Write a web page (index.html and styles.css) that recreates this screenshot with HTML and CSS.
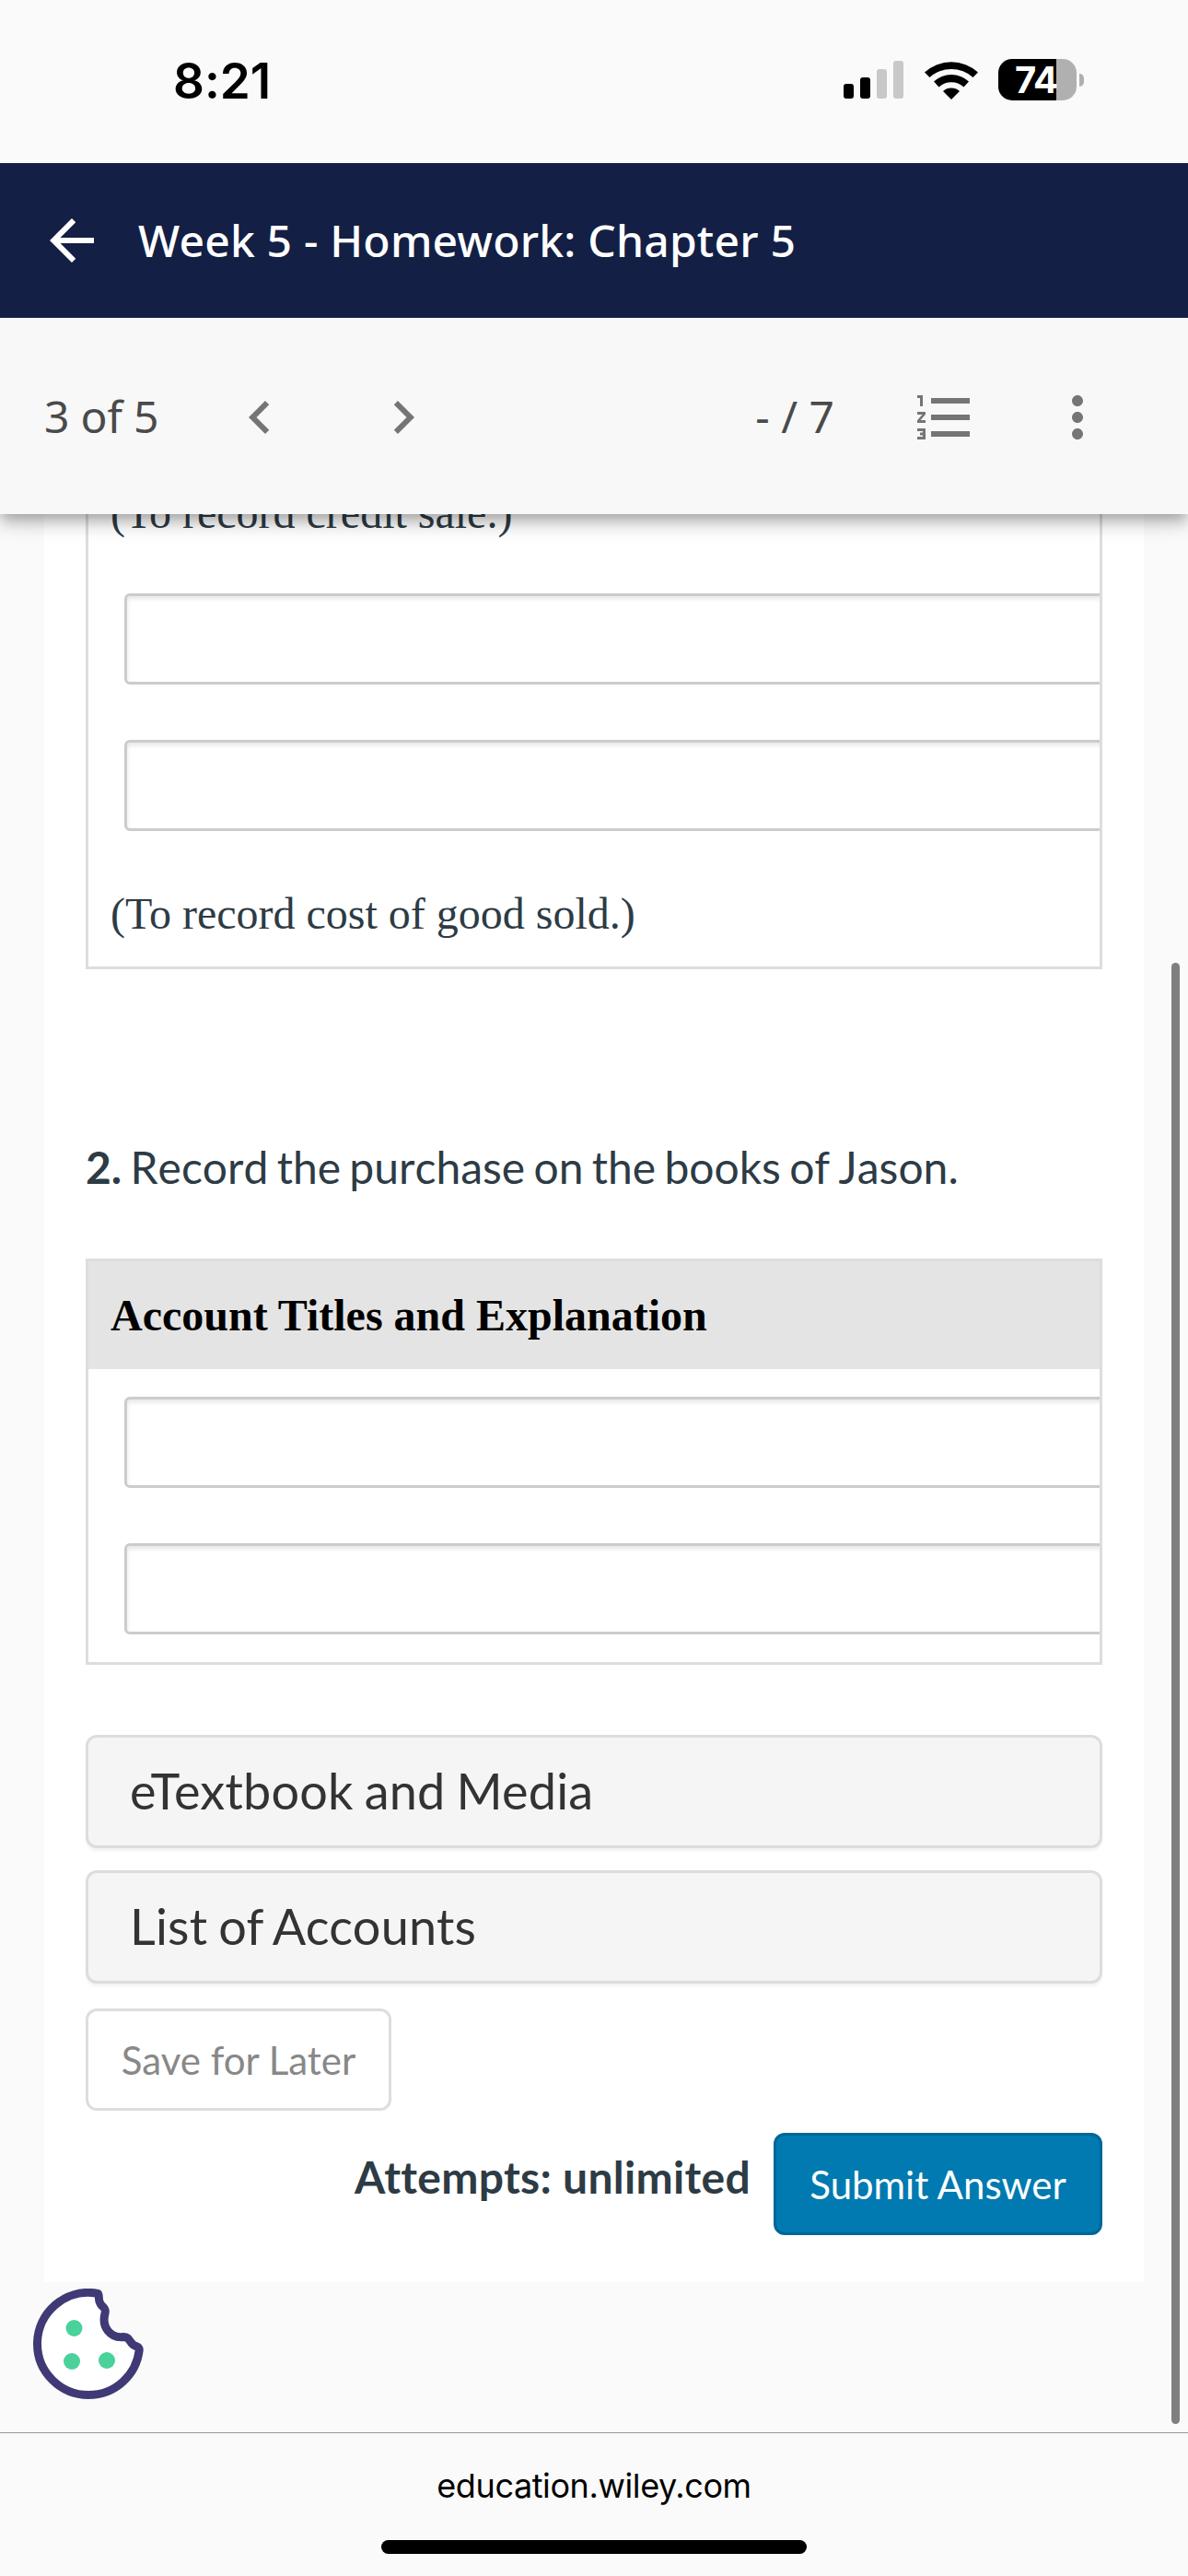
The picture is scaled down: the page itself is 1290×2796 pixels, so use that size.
FILE: index.html
```html
<!DOCTYPE html>
<html lang="en">
<head>
    <meta charset="UTF-8">
    <meta name="viewport" content="width=device-width, initial-scale=1.0">
    <title>Week 5 - Homework: Chapter 5</title>
    <link rel="stylesheet" href="styles.css">
</head>
<body>
    <div class="status-bar">
        <span class="time">8:21</span>
        <div class="status-icons">
            <svg class="signal" width="65" height="41" viewBox="0 0 65 41">
                <rect x="0" y="25" width="11" height="16" rx="3"/>
                <rect x="18" y="18" width="11" height="23" rx="3"/>
                <rect x="36" y="9" width="11" height="32" rx="3" fill="#c8c8c8"/>
                <rect x="54" y="0" width="11" height="41" rx="3" fill="#c8c8c8"/>
            </svg>
            <svg class="wifi" width="58" height="42" viewBox="0 0 58 42">
                <path d="M0 12.500A43 43 0 0 1 58 12.500L52.500 18A35 35 0 0 0 5.500 18Z"/>
                <path d="M10 22.500A28 28 0 0 1 48 22.500L42.500 28.500A20 20 0 0 0 15.500 28.500Z"/>
                <path d="M20 33A13.500 13.500 0 0 1 38 33L29 42Z"/>
            </svg>
            <div class="battery"><span>74</span></div>
            <div class="battery-tip"></div>
        </div>
    </div>

    <header class="header">
        <svg width="72" height="72" viewBox="0 0 24 24" fill="#fff">
            <path d="M20 11H7.83l5.59-5.59L12 4l-8 8 8 8 1.41-1.41L7.83 13H20v-2z"/>
        </svg>
        <h1>Week 5 - Homework: Chapter 5</h1>
    </header>

    <nav class="toolbar">
        <span class="position">3 of 5</span>
        <svg class="icon prev" viewBox="0 0 24 24"><path d="M15.41 7.41L14 6l-6 6 6 6 1.41-1.41L10.83 12z"/></svg>
        <svg class="icon next" viewBox="0 0 24 24"><path d="M10 6L8.59 7.41 13.17 12l-4.58 4.59L10 18l6-6z"/></svg>
        <span class="score">- / 7</span>
        <svg class="icon list" viewBox="0 0 24 24"><path d="M2 17h2v.5H3v1h1v.5H2v1h3v-4H2v1zm1-9h1V4H2v1h1v3zm-1 3h1.8L2 13.1v.9h3v-1H3.2L5 10.9V10H2v1zm5-6v2h14V5H7zm0 14h14v-2H7v2zm0-6h14v-2H7v2z"/></svg>
        <svg class="icon more" viewBox="0 0 24 24"><path d="M12 8c1.1 0 2-.9 2-2s-.9-2-2-2-2 .9-2 2 .9 2 2 2zm0 2c-1.1 0-2 .9-2 2s.9 2 2 2 2-.9 2-2-.9-2-2-2zm0 6c-1.1 0-2 .9-2 2s.9 2 2 2 2-.9 2-2-.9-2-2-2z"/></svg>
    </nav>

    <main class="page">
        <div class="card">
            <div class="journal journal-top">
                <p class="note note-clipped">(To record credit sale.)</p>
                <div class="field"></div>
                <div class="field"></div>
                <p class="note">(To record cost of good sold.)</p>
            </div>

            <p class="question"><b>2.</b> Record the purchase on the books of Jason.</p>

            <div class="journal">
                <div class="journal-head">Account Titles and Explanation</div>
                <div class="field"></div>
                <div class="field"></div>
            </div>

            <div class="panel first-panel">eTextbook and Media</div>
            <div class="panel">List of Accounts</div>

            <button type="button" class="btn save">Save for Later</button>

            <div class="submit-row">
                <span class="attempts">Attempts: unlimited</span>
                <button type="button" class="btn submit">Submit Answer</button>
            </div>
        </div>

        <svg class="cookie" width="122" height="120" viewBox="0 0 122 120">
            <path d="M68 5C35 0 4.500 26 4.500 60C4.500 91 30 115.500 60 115.500C90 115.500 112 93 115.200 67C115.500 62 111 64 107.500 60C103 54 102.500 52.500 98 52.500C84 54 74 42 78 27C79.500 21 76 21 73 16.500C70 12 72.500 9 70.500 5.500Q70 5 68 5Z" fill="#fff" stroke="#3f3975" stroke-width="9" stroke-linejoin="round"/>
            <circle cx="44.500" cy="43" r="9" fill="#4bd19b"/>
            <circle cx="42" cy="79" r="9" fill="#4bd19b"/>
            <circle cx="80" cy="78" r="9" fill="#4bd19b"/>
        </svg>
        <div class="scrollbar"></div>
    </main>

    <footer class="address-bar">
        <span class="url">education.wiley.com</span>
        <div class="home-indicator"></div>
    </footer>
</body>
</html>
```
FILE: styles.css
```css
* {
    box-sizing: border-box;
}

body {
    margin: 0;
    width: 1290px;
    height: 2796px;
    overflow: hidden;
    background-color: #fafafa;
    font-family: Lato, sans-serif;
    font-variant-ligatures: none;
    color: #2d3b45;
    display: flex;
    flex-direction: column;
}

h1, p {
    margin: 0;
}

svg {
    display: block;
    flex: none;
}

/* Phone status bar */
.status-bar {
    height: 177px;
    flex: none;
    display: flex;
    justify-content: space-between;
    align-items: flex-start;
    padding: 56px 113px 0 188px;
    font-family: Inter, sans-serif;
    color: #000;
}

.time {
    font-size: 53px;
    font-weight: 600;
    line-height: 64px;
}

.status-icons {
    display: flex;
    align-items: center;
    padding-top: 8px;
}

.wifi {
    margin: 0 22px 0 23px;
}

.battery {
    width: 85px;
    height: 45px;
    border-radius: 15px;
    background: linear-gradient(to right, #000 63px, #b0b0b0 63px);
    color: #fff;
    font-size: 40px;
    font-weight: 700;
    line-height: 45px;
    padding-left: 18px;
    letter-spacing: -1px;
}

.battery-tip {
    width: 5px;
    height: 14px;
    margin-left: 3px;
    border-radius: 0 7px 7px 0;
    background-color: #b0b0b0;
}

/* Title and navigation */
.header {
    height: 168px;
    flex: none;
    display: flex;
    align-items: center;
    padding-left: 42px;
    background-color: #141f45;
    color: #fff;
    position: relative;
    z-index: 2;
}

.header h1 {
    margin-left: 36px;
    font-family: "Noto Sans", sans-serif;
    font-size: 48px;
    font-weight: 500;
    line-height: 66px;
    letter-spacing: 0.2px;
}

.toolbar {
    height: 213px;
    flex: none;
    display: flex;
    align-items: center;
    padding: 3px 84px 0 48px;
    background-color: #f8f8f8;
    box-shadow: 0 6px 12px -3px rgba(0, 0, 0, 0.2), 0 12px 15px rgba(0, 0, 0, 0.14), 0 3px 30px rgba(0, 0, 0, 0.12);
    position: relative;
    z-index: 1;
    font-family: "Noto Sans", sans-serif;
    font-size: 48px;
    color: #4a4a4a;
}

.icon {
    width: 72px;
    height: 72px;
    fill: #757575;
}

.position,
.score {
    padding-bottom: 3px;
}

.position {
    width: 198px;
    letter-spacing: -0.2px;
}

.next {
    margin-left: 84px;
}

.score {
    margin-left: auto;
}

.list {
    margin-left: 84px;
}

.more {
    margin-left: 72px;
}

/* Assignment */
.page {
    height: 2082px;
    flex: none;
    position: relative;
    overflow: hidden;
}

.card {
    width: 1194px;
    height: 1919px;
    margin: 0 48px;
    padding: 0 45px;
    background-color: #fff;
}

.journal {
    border: 3px solid #ddd;
    overflow: hidden;
    font-family: "Liberation Serif", serif;
    font-size: 48px;
    height: 441px;
}

.journal-top {
    border-top: none;
    height: 494px;
}

.journal-head {
    height: 117px;
    padding: 29px 24px 0;
    background-color: #e4e4e4;
    color: #000;
    font-weight: bold;
    line-height: 60px;
}

.note {
    padding-left: 24px;
    line-height: 60px;
    margin-top: 60px;
}

.note-clipped {
    margin-top: -31px;
}

.field {
    width: 1200px;
    height: 99px;
    margin: 30px 0 60px 39px;
    border: 3px solid #ccc;
    border-radius: 6px;
    box-shadow: inset 0 3px 5px rgba(0, 0, 0, 0.1);
}

.note-clipped + .field {
    margin-top: 57px;
}

.question {
    margin: 182px 0 66px;
    font-size: 48px;
    line-height: 66px;
    font-kerning: none;
    word-spacing: -3px;
}

.panel {
    height: 123px;
    margin-bottom: 24px;
    padding-left: 45px;
    border: 3px solid #ddd;
    border-radius: 12px;
    background-color: #f5f5f5;
    box-shadow: 0 3px 3px rgba(0, 0, 0, 0.05);
    color: #333;
    font-size: 54px;
    line-height: 116px;
    letter-spacing: 0.2px;
    word-spacing: -2px;
}

.first-panel {
    margin-top: 76px;
}

.btn {
    display: block;
    height: 111px;
    border-radius: 12px;
    font-family: inherit;
    font-size: 42px;
    padding: 0;
}

.save {
    width: 332px;
    margin-top: 27px;
    border: 3px solid #ddd;
    background-color: #fff;
    color: #888;
}

.submit-row {
    display: flex;
    justify-content: flex-end;
    margin-top: 24px;
}

.attempts {
    margin-right: 25px;
    font-size: 48px;
    font-weight: bold;
    line-height: 96px;
    letter-spacing: 0.3px;
}

.submit {
    width: 357px;
    border: 3px solid #006699;
    background-color: #007ab0;
    color: #fff;
}

.cookie {
    margin: 7px 0 0 36px;
}

.scrollbar {
    position: absolute;
    top: 487px;
    right: 9px;
    width: 9px;
    height: 1586px;
    border-radius: 5px;
    background-color: #7f7f7f;
}

/* Browser footer */
.address-bar {
    height: 156px;
    flex: none;
    border-top: 1px solid #999;
    display: flex;
    flex-direction: column;
    align-items: center;
    font-family: Inter, sans-serif;
    color: #000;
}

.url {
    margin-top: 34px;
    font-size: 36px;
    line-height: 46px;
    letter-spacing: -0.4px;
}

.home-indicator {
    width: 462px;
    height: 15px;
    margin-top: 36px;
    border-radius: 8px;
    background-color: #000;
}
```
